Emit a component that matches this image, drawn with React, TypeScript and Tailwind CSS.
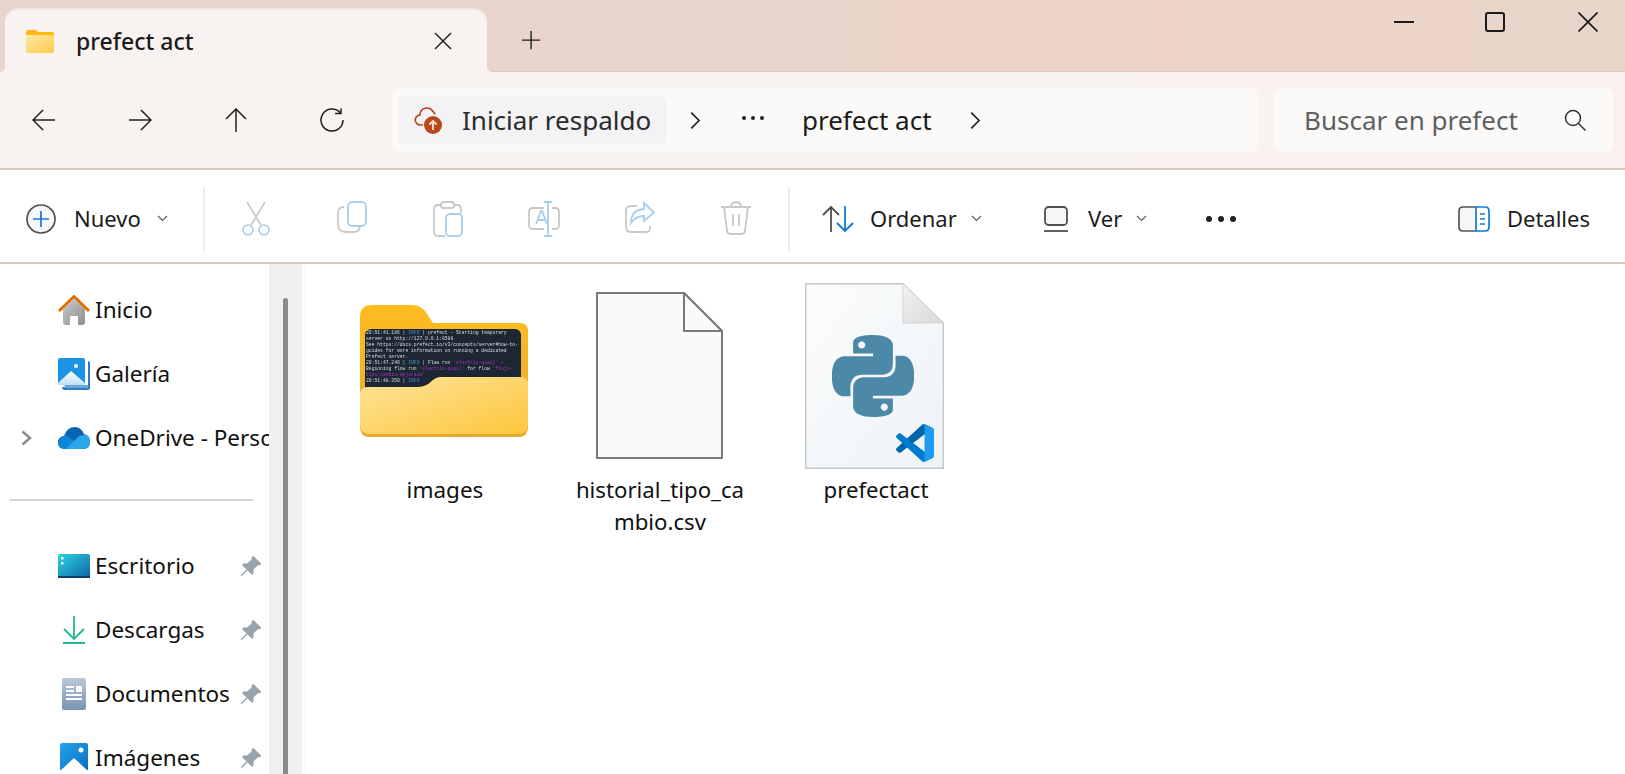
import React from "react";
import { SiPython } from "react-icons/si";
import { BsPinAngleFill } from "react-icons/bs";

const Stroke = ({ size = 24, color = "#1f1f1f", width = 1.5, d }: { size?: number; color?: string; width?: number; d: string }) => (
  <svg width={size} height={size} viewBox="0 0 24 24" fill="none" stroke={color} strokeWidth={width} className="shrink-0">
    <path d={d} />
  </svg>
);

const Chevron = () => (
  <svg width="11" height="7" viewBox="0 0 11 7" fill="none" stroke="#5c5c5c" strokeWidth="1.2" className="shrink-0">
    <path d="M1 1l4.5 4.5L10 1" />
  </svg>
);

const SmallFolder = () => (
  <svg width="28" height="23" viewBox="0 0 28 23" className="shrink-0">
    <defs>
      <linearGradient id="sf" x1="0" y1="0" x2="1" y2="1">
        <stop offset="0" stopColor="#ffe9a6" />
        <stop offset="1" stopColor="#fdc94a" />
      </linearGradient>
    </defs>
    <path d="M0 2q0-2 2-2h7q2 0 3 2h14q2 0 2 2v6H0z" fill="#fdb813" />
    <path d="M0 5h26q2 0 2 2v14q0 2-2 2H2q-2 0-2-2z" fill="url(#sf)" />
  </svg>
);

const CloudUp = () => (
  <svg width="30" height="30" viewBox="0 0 30 30" className="shrink-0">
    <path d="M9 20H6.500a5 5 0 0 1-.5-10 7 7 0 0 1 13-3.500q1.500 1 2 3" fill="none" stroke="#b8471b" strokeWidth="1.600" />
    <circle cx="19" cy="20" r="9" fill="#b8471b" />
    <path d="M19 25v-9m-3.500 3.500L19 16l3.500 3.500" fill="none" stroke="#ffe4d6" strokeWidth="1.800" />
  </svg>
);

const Scissors = () => (
  <svg width="30" height="36" viewBox="0 0 30 36" fill="none" strokeWidth="1.700" className="shrink-0">
    <path d="M6 1l14 23M24 1L10 24" stroke="#c9c9c9" />
    <circle cx="7" cy="29" r="5" stroke="#a6cff0" />
    <circle cx="23" cy="29" r="5" stroke="#a6cff0" />
  </svg>
);

const CopyIcon = () => (
  <svg width="30" height="32" viewBox="0 0 30 32" fill="none" strokeWidth="1.800" className="shrink-0">
    <path d="M7 6q-6 0-6 6v11q0 8 8 8h8q5 0 6-5" stroke="#c9c9c9" />
    <rect x="11" y="1" width="18" height="24" rx="4.500" stroke="#a6cff0" />
  </svg>
);

const PasteIcon = () => (
  <svg width="30" height="36" viewBox="0 0 30 36" fill="none" strokeWidth="1.800" className="shrink-0">
    <path d="M12 35H5q-4 0-4-4V8q0-4 4-4h19q4 0 4 4v4" stroke="#c9c9c9" />
    <rect x="8" y="1" width="13" height="6" rx="2.500" stroke="#c9c9c9" fill="#fff" />
    <rect x="13" y="13" width="16" height="22" rx="3.500" stroke="#a6cff0" fill="#fff" />
  </svg>
);

const RenameIcon = () => (
  <svg width="32" height="36" viewBox="0 0 32 36" fill="none" strokeWidth="1.800" className="shrink-0">
    <path d="M16 7H5q-4 0-4 4v13q0 4 4 4h11M24 7h3q4 0 4 4v13q0 4-4 4h-3" stroke="#c9c9c9" />
    <path d="M8 23l5-13h1l5 13M10 19h7M16 1h8M16 35h8M20 1v34" stroke="#a6cff0" />
  </svg>
);

const ShareIcon = () => (
  <svg width="30" height="32" viewBox="0 0 30 32" fill="none" strokeWidth="1.800" className="shrink-0">
    <path d="M12 5H6q-5 0-5 5v16q0 5 5 5h15q4 0 4-4v-2" stroke="#c9c9c9" />
    <path d="M19 2l10 9.500L19 20v-5q-8 0-13 7 0-13 13-14z" stroke="#a6cff0" />
  </svg>
);

const TrashIcon = () => (
  <svg width="30" height="34" viewBox="0 0 30 34" fill="none" stroke="#c9c9c9" strokeWidth="1.800" className="shrink-0">
    <path d="M0 6h30M10 6q0-5 5-5t5 5M3 6l3 24q.5 3 3.500 3h11q3 0 3.500-3l3-24M12 13v12M18 13v12" />
  </svg>
);

const SortIcon = () => (
  <svg width="32" height="28" viewBox="0 0 32 28" fill="none" strokeWidth="1.800" className="shrink-0">
    <path d="M9 27V2M1 10l8-8 8 8" stroke="#4f4f4f" />
    <path d="M23 1v25M15 18l8 8 8-8" stroke="#0f7bd6" />
  </svg>
);

const ViewIcon = () => (
  <svg width="24" height="26" viewBox="0 0 24 26" fill="none" stroke="#4f4f4f" strokeWidth="1.800" className="shrink-0">
    <rect x="1" y="1" width="22" height="18" rx="3.500" fill="#f6f6f6" />
    <path d="M0 25h24" />
  </svg>
);

const DetailsIcon = () => (
  <svg width="32" height="26" viewBox="0 0 32 26" fill="none" strokeWidth="1.700" className="shrink-0">
    <path d="M18 1H5Q1 1 1 5v16q0 4 4 4h13" stroke="#555" fill="#f7f7f7" />
    <path d="M18 1h9q4 0 4 4v16q0 4-4 4h-9z" stroke="#0f7bd6" fill="#fff" />
    <path d="M22 8h5M22 13h5M22 18h5" stroke="#0f7bd6" />
  </svg>
);

const HomeIcon = () => (
  <svg width="32" height="30" viewBox="0 0 32 30">
    <defs>
      <linearGradient id="hm" x1="0" y1="0" x2="1" y2="1">
        <stop offset="0" stopColor="#c9c9c9" />
        <stop offset="1" stopColor="#8f8f8f" />
      </linearGradient>
    </defs>
    <path d="M5 14L16 4l11 10v13q0 3-3 3h-4v-8q0-1-1-1h-6q-1 0-1 1v8H8q-3 0-3-3z" fill="url(#hm)" />
    <path d="M1 16L16 1.500 31 16" fill="none" stroke="#e06c00" strokeWidth="3" strokeLinejoin="round" />
  </svg>
);

const GalleryIcon = () => (
  <svg width="32" height="32" viewBox="0 0 32 32">
    <defs>
      <linearGradient id="gl" x1="0" y1="0" x2="0" y2="1">
        <stop offset="0" stopColor="#ffffff" />
        <stop offset="1" stopColor="#bfe0fb" />
      </linearGradient>
    </defs>
    <path d="M30 3q2 0 2 2v25q0 2-2 2H7q-3 0-3-3h26z" fill="#2f7cc4" />
    <path d="M6 27h24v3H8z" fill="#6aa5dc" />
    <rect x="0" y="0" width="27" height="27" rx="2" fill="#1c93e3" />
    <path d="M0 25L13 13l14 12v2H0z" fill="url(#gl)" />
    <circle cx="18" cy="8" r="2" fill="#fff" />
  </svg>
);

const OneDriveIcon = () => (
  <svg width="32" height="22" viewBox="0 0 32 22">
    <defs>
      <clipPath id="od">
        <path d="M7 22Q0 22 0 15.500 0 10 6 9 9 0 17 0q6 0 9 7 6 1 6 8 0 7-7 7z" />
      </clipPath>
    </defs>
    <g clipPath="url(#od)">
      <rect width="32" height="22" fill="#0a64b4" />
      <path d="M0 8h8l11 8-7 6H0z" fill="#0f86d8" />
      <path d="M8 22l11-11q3-3 7-3h6v14z" fill="#28a8ea" />
    </g>
  </svg>
);

const DesktopIcon = () => (
  <svg width="32" height="24" viewBox="0 0 32 24">
    <defs>
      <linearGradient id="dk" x1="0" y1="0" x2="1" y2="1">
        <stop offset="0" stopColor="#30d5e0" />
        <stop offset="1" stopColor="#0b62a8" />
      </linearGradient>
    </defs>
    <rect width="32" height="24" rx="2" fill="url(#dk)" />
    <rect x="3" y="3" width="2.500" height="2.500" fill="#e8fbff" />
    <rect x="3" y="8" width="2.500" height="2.500" fill="#e8fbff" />
    <rect y="22" width="32" height="2" fill="#0a3f6f" />
  </svg>
);

const DownloadIcon = () => (
  <svg width="32" height="30" viewBox="0 0 32 30" fill="none" stroke="#22b894" strokeWidth="1.800">
    <path d="M16 1v23M6 14l10 10 10-10M5 28h22" />
  </svg>
);

const DocsIcon = () => (
  <svg width="32" height="32" viewBox="0 0 32 32">
    <defs>
      <linearGradient id="dc" x1="0" y1="0" x2="0" y2="1">
        <stop offset="0" stopColor="#b9c9db" />
        <stop offset="1" stopColor="#7893b2" />
      </linearGradient>
    </defs>
    <rect x="4" y="0" width="24" height="32" rx="2" fill="url(#dc)" />
    <path d="M8 9h8M8 13h8M8 17h16M8 21h16" stroke="#fff" strokeWidth="1.800" />
    <rect x="18" y="8" width="6" height="6" fill="#fff" />
  </svg>
);

const PicturesIcon = () => (
  <svg width="32" height="30" viewBox="0 0 32 30">
    <defs>
      <linearGradient id="pc" x1="0" y1="0" x2="1" y2="1">
        <stop offset="0" stopColor="#25a3ea" />
        <stop offset="1" stopColor="#0b6fbe" />
      </linearGradient>
    </defs>
    <rect x="2" y="0" width="28" height="28" rx="2" fill="url(#pc)" />
    <path d="M2 28L16 15l14 13z" fill="#fff" />
    <circle cx="23" cy="7" r="2.500" fill="#fff" />
  </svg>
);

const BigFolder = () => (
  <svg width="170" height="134" viewBox="0 0 170 134" className="shrink-0">
    <defs>
      <linearGradient id="bb" x1="0" y1="0" x2="0" y2="1">
        <stop offset="0" stopColor="#fdbd1f" />
        <stop offset="1" stopColor="#e8ab2e" />
      </linearGradient>
      <linearGradient id="ff" x1="0" y1="0" x2="1" y2="1">
        <stop offset="0" stopColor="#fee39a" />
        <stop offset="1" stopColor="#fdc73c" />
      </linearGradient>
      <filter id="soft">
        <feGaussianBlur stdDeviation="0.25" />
      </filter>
    </defs>
    <path d="M0 12Q0 0 12 0H52Q60 0 65 6L73 18H160Q168 18 168 26V122H0Z" fill="url(#bb)" />
    <rect x="5" y="24" width="156" height="70" rx="6" fill="#1c2733" />
    {/* thumbnail of a terminal, a little soft like the real one */}
    <g fontFamily="'Liberation Mono', monospace" fontSize="4.700" fill="#d7dce0" filter="url(#soft)">
      <text x="6" y="29">20:51:41.186 | <tspan fill="#3f86c4">INFO</tspan>    | prefect - Starting temporary</text>
      <text x="6" y="35">server on http://127.0.0.1:8588</text>
      <text x="6" y="41">See https://docs.prefect.io/v3/concepts/server#how-to-</text>
      <text x="6" y="47">guides for more information on running a dedicated</text>
      <text x="6" y="53">Prefect server.</text>
      <text x="6" y="59">20:51:47.240 | <tspan fill="#3f86c4">INFO</tspan>    | Flow run <tspan fill="#a52fc0">'electric-quail'</tspan> -</text>
      <text x="6" y="65">Beginning flow run <tspan fill="#a52fc0">'electric-quail'</tspan> for flow <tspan fill="#a52fc0">'flujo-</tspan></text>
      <text x="6" y="71" fill="#a52fc0">tipo-cambio-mejorado'</text>
      <text x="6" y="77">20:51:48.350 | <tspan fill="#3f86c4">INFO</tspan></text>
    </g>
    <path d="M0 90Q0 82 8 82H58Q66 82 72 76Q76 72 82 72H160Q168 72 168 80V122Q168 132 158 132H10Q0 132 0 122Z" fill="#e8a92e" />
    <path d="M0 90Q0 82 8 82H58Q66 82 72 76Q76 72 82 72H160Q168 72 168 80V120Q168 129 158 129H10Q0 129 0 120Z" fill="url(#ff)" />
  </svg>
);

const BlankPage = () => (
  <svg width="127" height="167" viewBox="0 0 127 167" className="shrink-0">
    <path d="M1 1H88L126 39V166H1Z" fill="#fafafa" stroke="#7a7a7a" strokeWidth="2" />
    <path d="M88 1V39H126Z" fill="#fafafa" stroke="#7a7a7a" strokeWidth="2" />
  </svg>
);

const PythonPage = () => (
  <div className="relative w-[139px] h-[186px] shrink-0">
    <svg width="139" height="186" viewBox="0 0 139 186">
      <defs>
        <linearGradient id="pp" x1="0" y1="0" x2="1" y2="1">
          <stop offset="0" stopColor="#fbfcfd" />
          <stop offset="1" stopColor="#eef3f6" />
        </linearGradient>
        <linearGradient id="pf" x1="0" y1="0" x2="1" y2="1">
          <stop offset="0" stopColor="#f2f2f2" />
          <stop offset="1" stopColor="#d8d8d8" />
        </linearGradient>
      </defs>
      <path d="M.7.7H98L138.300 40V185.300H.7Z" fill="url(#pp)" stroke="#c4c8ca" strokeWidth="1.400" />
      <path d="M98 .7V40H138.300Z" fill="url(#pf)" stroke="#d4d4d4" strokeWidth="1" />
    </svg>
    {/* python mark and the vscode badge sit over the page */}
    <SiPython className="absolute left-[27px] top-[52px] text-[#4c89a8]" size={82} />
    <svg width="38" height="38" viewBox="0 0 100 100" className="absolute left-[91px] top-[141px]">
      <path
        d="M96.4614 10.7962L75.8569 0.875542C73.4719 -0.272773 70.6217 0.211611 68.75 2.08333L1.29858 63.5832C-0.515693 65.2373 -0.513607 68.0937 1.30308 69.7452L6.81272 74.754C8.29793 76.1042 10.5347 76.2036 12.1338 74.9905L93.3609 13.3699C96.086 11.3026 100 13.2462 100 16.6667V16.4275C100 14.0265 98.6246 11.8378 96.4614 10.7962Z"
        fill="#0065A9"
      />
      <path
        d="M96.4614 89.2038L75.8569 99.1245C73.4719 100.273 70.6217 99.7884 68.75 97.9167L1.29858 36.4169C-0.515693 34.7627 -0.513607 31.9063 1.30308 30.2548L6.81272 25.246C8.29793 23.8958 10.5347 23.7964 12.1338 25.0095L93.3609 86.6301C96.086 88.6974 100 86.7538 100 83.3334V83.5726C100 85.9735 98.6246 88.1622 96.4614 89.2038Z"
        fill="#007ACC"
      />
      <path
        d="M75.8578 99.1263C73.4721 100.274 70.6219 99.7885 68.75 97.9166C71.0564 100.223 75 98.5895 75 95.3278V4.67213C75 1.41039 71.0564 -0.223106 68.75 2.08329C70.6219 0.211402 73.4721 -0.273666 75.8578 0.873633L96.4587 10.7807C98.6234 11.8217 100 14.0112 100 16.4132V83.5871C100 85.9891 98.6234 88.1786 96.4586 89.2196L75.8578 99.1263Z"
        fill="#1F9CF0"
      />
    </svg>
  </div>
);

const navItems = [
  { label: "Inicio", icon: <HomeIcon /> },
  { label: "Galería", icon: <GalleryIcon /> },
  { label: "OneDrive - Personal", icon: <OneDriveIcon />, chevron: true },
];

const pinnedItems = [
  { label: "Escritorio", icon: <DesktopIcon /> },
  { label: "Descargas", icon: <DownloadIcon /> },
  { label: "Documentos", icon: <DocsIcon /> },
  { label: "Imágenes", icon: <PicturesIcon /> },
];

export default function App() {
  return (
    <div className="h-screen w-full overflow-hidden flex flex-col bg-white text-[#1b1b1b] font-['Noto_Sans',sans-serif]">
      {/* tabs */}
      <div className="h-[72px] shrink-0 flex bg-[linear-gradient(90deg,#e7d5ce,#e9d5cb_50%,#edd3c8_72%,#e8d5ca)] shadow-[inset_0_-1px_0_#dcc8bf]">
        <div className="relative ml-[5px] mt-[8px] w-[482px] h-[64px] rounded-t-[14px] border-t-2 border-[#efe6e2] bg-[#f8f3f1] flex items-center pl-[21px]">
          <div className="absolute bottom-0 -left-[5px] w-[5px] h-[5px] bg-[#f8f3f1]">
            <div className="w-full h-full rounded-br-[5px] bg-[#e7d5ce]" />
          </div>
          <div className="absolute bottom-0 -right-[5px] w-[5px] h-[5px] bg-[#f8f3f1]">
            <div className="w-full h-full rounded-bl-[5px] bg-[#e7d5ce]" />
          </div>
          <SmallFolder />
          <span className="ml-[22px] text-[23px] font-medium">prefect act</span>
          <svg width="18" height="18" viewBox="0 0 18 18" stroke="#222" strokeWidth="1.500" className="ml-auto mr-[35px]">
            <path d="M1 1l16 16M17 1L1 17" />
          </svg>
        </div>
        <div className="ml-[34px] flex items-center pt-[10px]">
          <Stroke size={22} d="M11 1v20M1 11h20" />
        </div>
        <div className="ml-auto flex items-start pt-[12px] pr-[27px]">
          <div className="mt-[9px] w-[20px] h-[2px] bg-[#1b1b1b]" />
          <div className="ml-[71px] w-[20px] h-[20px] rounded-[3px] border-2 border-[#1b1b1b]" />
          <svg width="20" height="20" viewBox="0 0 20 20" stroke="#1b1b1b" strokeWidth="1.700" className="ml-[73px]">
            <path d="M.5.5l19 19M19.500.5l-19 19" />
          </svg>
        </div>
      </div>

      {/* address row */}
      <div className="h-[98px] shrink-0 flex items-center border-b-2 border-[#d9c8c1] bg-[linear-gradient(90deg,#f8f3f1,#f9f3f1_60%,#faf1ee)]">
        <div className="w-[392px] shrink-0 flex items-center pl-[32px]">
          <Stroke size={24} d="M23 12H1.500M11 2L1 12l10 10" />
          <div className="ml-[72px]">
            <Stroke size={24} d="M1 12h21.500M13 2l10 10-10 10" />
          </div>
          <div className="ml-[72px]">
            <Stroke size={24} d="M12 24V1.500M2 11L12 1l10 10" />
          </div>
          <div className="ml-[72px]">
            <Stroke size={24} d="M20 4.500A11 11 0 1 0 23 12M21 .5v5h-6" />
          </div>
        </div>
        <div className="w-[866px] h-[64px] shrink-0 rounded-[8px] bg-[#fcfaf9] flex items-center pl-[6px]">
          <div className="w-[269px] h-[48px] shrink-0 rounded-[6px] bg-[#f3f2f4] flex items-center pl-[16px]">
            <CloudUp />
            <span className="ml-[18px] text-[26px] text-[#2b2b2b] whitespace-nowrap">Iniciar respaldo</span>
          </div>
          <div className="ml-[20px]">
            <Stroke size={17} color="#222" d="M6 1l11 11L6 23" width={2.4} />
          </div>
          <div className="ml-[38px] mb-[4px] flex gap-[5px]">
            <div className="w-[4px] h-[4px] rounded-full bg-[#222]" />
            <div className="w-[4px] h-[4px] rounded-full bg-[#222]" />
            <div className="w-[4px] h-[4px] rounded-full bg-[#222]" />
          </div>
          <span className="ml-[38px] text-[26px] whitespace-nowrap">prefect act</span>
          <div className="ml-[35px]">
            <Stroke size={17} color="#222" d="M6 1l11 11L6 23" width={2.4} />
          </div>
        </div>
        <div className="ml-[16px] w-[339px] h-[64px] rounded-[8px] bg-[#fcfaf9] flex items-center pl-[30px] pr-[27px]">
          <span className="text-[26px] text-[#5f5f5f] whitespace-nowrap">Buscar en prefect</span>
          <svg width="22" height="22" viewBox="0 0 22 22" fill="none" stroke="#333" strokeWidth="1.500" className="ml-auto">
            <circle cx="9" cy="9" r="7.500" />
            <path d="M14.500 14.500l7 7" />
          </svg>
        </div>
      </div>

      {/* toolbar */}
      <div className="h-[94px] shrink-0 flex items-center pt-[5px] border-b-2 border-[#d9c8c1] bg-white">
        <div className="w-[203px] shrink-0 flex items-center pl-[26px]">
          <svg width="30" height="30" viewBox="0 0 30 30" fill="none" strokeWidth="1.700" className="shrink-0">
            <circle cx="15" cy="15" r="14" fill="#f7f7f7" stroke="#4f4f4f" />
            <path d="M15 7v16M7 15h16" stroke="#0f7bd6" />
          </svg>
          <span className="ml-[18px] w-[83px] text-[22px] whitespace-nowrap">Nuevo</span>
          <Chevron />
        </div>
        <div className="w-[2px] h-[64px] bg-[#ececec] shrink-0" />
        <div className="ml-[3px] flex shrink-0">
          <div className="w-[96px] flex justify-center"><Scissors /></div>
          <div className="w-[96px] flex justify-center"><CopyIcon /></div>
          <div className="w-[96px] flex justify-center"><PasteIcon /></div>
          <div className="w-[96px] flex justify-center"><RenameIcon /></div>
          <div className="w-[96px] flex justify-center"><ShareIcon /></div>
          <div className="w-[96px] flex justify-center"><TrashIcon /></div>
        </div>
        <div className="ml-[4px] w-[2px] h-[64px] bg-[#ececec] shrink-0" />
        <div className="ml-[32px] flex items-center shrink-0">
          <SortIcon />
          <span className="ml-[16px] w-[101px] text-[22px]">Ordenar</span>
          <Chevron />
        </div>
        <div className="ml-[62px] flex items-center shrink-0">
          <ViewIcon />
          <span className="ml-[20px] w-[48px] text-[22px]">Ver</span>
          <Chevron />
        </div>
        <div className="ml-[59px] flex gap-[6px] shrink-0">
          <div className="w-[6px] h-[6px] rounded-full bg-[#222]" />
          <div className="w-[6px] h-[6px] rounded-full bg-[#222]" />
          <div className="w-[6px] h-[6px] rounded-full bg-[#222]" />
        </div>
        <div className="ml-auto pr-[35px] flex items-center shrink-0">
          <DetailsIcon />
          <span className="ml-[17px] text-[22px]">Detalles</span>
        </div>
      </div>

      {/* body */}
      <div className="flex-1 flex min-h-0">
        <div className="w-[269px] shrink-0 overflow-hidden pt-[14px]">
          {navItems.map((item) => (
            <div key={item.label} className="h-[64px] flex items-center whitespace-nowrap">
              <div className="w-[58px] shrink-0 pl-[21px]">
                {item.chevron && (
                  <svg width="11" height="16" viewBox="0 0 11 16" fill="none" stroke="#8c8c8c" strokeWidth="2.500">
                    <path d="M1.500 1.500L9 8l-7.500 6.500" />
                  </svg>
                )}
              </div>
              <div className="w-[37px] shrink-0">{item.icon}</div>
              <span className="text-[22.5px] text-[#111] -mt-[1px]">{item.label}</span>
            </div>
          ))}
          <div className="h-[64px] flex items-center pl-[10px] pb-[4px]">
            <div className="w-[243px] h-[2px] bg-[#d4d4d4]" />
          </div>
          {pinnedItems.map((item) => (
            <div key={item.label} className="h-[64px] flex items-center whitespace-nowrap pl-[58px] pr-[7px]">
              <div className="w-[37px] shrink-0">{item.icon}</div>
              <span className="text-[22.5px] text-[#111] -mt-[1px]">{item.label}</span>
              <BsPinAngleFill size={23} className="ml-auto shrink-0 text-[#99a3ab]" />
            </div>
          ))}
        </div>
        <div className="w-[33px] shrink-0 bg-[#f0f0f0] pl-[14px] pt-[34px]">
          <div className="w-[5px] h-full rounded-t-full bg-[#8a8a8a]" />
        </div>
        <div className="w-[4px] shrink-0 border-r border-[#f3f3f3]" />

        {/* files */}
        <div className="flex-1 flex items-start pl-[33px] pt-[17px]">
          <div className="w-[212px] shrink-0 flex flex-col items-center">
            <div className="h-[193px] flex items-start justify-center pt-[24px]"><BigFolder /></div>
            <span className="text-[22.5px] leading-[32px] text-[#111]">images</span>
          </div>
          <div className="w-[216px] shrink-0 flex flex-col items-center">
            <div className="h-[193px] flex items-start justify-center pt-[11px]"><BlankPage /></div>
            <span className="pl-[2px] text-[22.2px] leading-[32px] text-[#111] text-center whitespace-nowrap">
              historial_tipo_ca
              <br />
              mbio.csv
            </span>
          </div>
          <div className="w-[214px] shrink-0 flex flex-col items-center">
            <div className="h-[193px] flex items-start justify-center pt-[2px]"><PythonPage /></div>
            <span className="pl-[4px] text-[22.2px] leading-[32px] text-[#111]">prefectact</span>
          </div>
        </div>
      </div>
    </div>
  );
}
